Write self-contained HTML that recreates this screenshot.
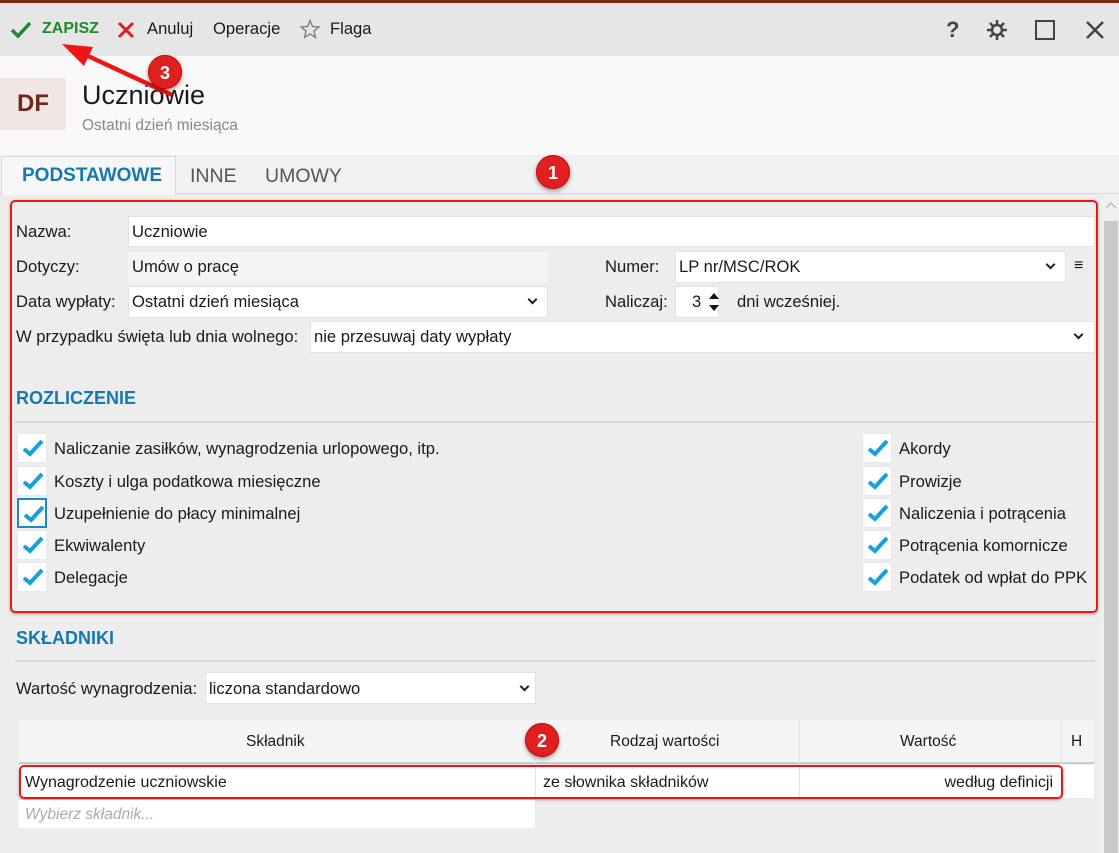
<!DOCTYPE html>
<html><head><meta charset="utf-8"><style>
*{box-sizing:border-box;margin:0;padding:0}
body{width:1119px;height:853px;overflow:hidden;background:#ededed;font-family:"Liberation Sans",sans-serif;font-size:16px;color:#1a1a1a;position:relative}
.a{position:absolute;white-space:nowrap}
.in{position:absolute;background:#fff;border:1px solid #e2e2e2}
.t{position:absolute;white-space:nowrap;line-height:20px}
.f{font-size:16.6px}
.cb{position:absolute;width:30px;height:30px;background:#fff;border:1px solid #e8e8e8}
.cb svg{position:absolute;left:4px;top:4px}
.badge{position:absolute;width:34px;height:34px;border-radius:50%;background:#e02020;color:#fff;font-weight:bold;font-size:18px;text-align:center;line-height:34px;box-shadow:0 2px 4px rgba(0,0,0,.4);border:1px solid #c00}
.h{color:#1479b0;font-weight:bold;font-size:18px}
.chev{position:absolute;width:8px;height:8px;border-right:2px solid #222;border-bottom:2px solid #222;transform:rotate(45deg)}
</style></head><body>
<div class="a" style="left:0;top:0;width:1119px;height:3px;background:#7a2810"></div>
<div class="a" style="left:0;top:3px;width:1119px;height:53px;background:#e6e6e6"></div>
<svg class="a" style="left:10px;top:20px" width="22" height="20"><path d="M2 10 L8 16 L20 3" stroke="#1e8a2a" stroke-width="3.5" fill="none"/></svg>
<div class="t" style="left:42px;top:19px;color:#1e8a2a;font-weight:bold">ZAPISZ</div>
<svg class="a" style="left:117px;top:21px" width="18" height="18"><path d="M2 2 L16 16 M16 2 L2 16" stroke="#e02020" stroke-width="3"/></svg>
<div class="t f" style="left:147px;top:19px">Anuluj</div>
<div class="t f" style="left:213px;top:19px">Operacje</div>
<svg class="a" style="left:300px;top:19px" width="20" height="20"><path d="M10 1.5 L12.5 7.5 L19 8 L14 12 L15.5 18.5 L10 15 L4.5 18.5 L6 12 L1 8 L7.5 7.5 Z" stroke="#777" stroke-width="1.3" fill="none"/></svg>
<div class="t f" style="left:330px;top:19px">Flaga</div>
<div class="t" style="left:946px;top:20px;font-size:22px;color:#444;font-weight:bold">?</div>
<svg class="a" style="left:986px;top:19px" width="22" height="22"><circle cx="11" cy="11" r="5" stroke="#444" stroke-width="2.5" fill="none"/><path d="M11 1v5M11 16v5M1 11h5M16 11h5M4 4l3.5 3.5M14.5 14.5L18 18M18 4l-3.5 3.5M7.5 14.5L4 18" stroke="#444" stroke-width="2.5"/></svg>
<div class="a" style="left:1035px;top:20px;width:20px;height:20px;border:2.5px solid #444"></div>
<svg class="a" style="left:1085px;top:20px" width="20" height="20"><path d="M2 2L18 18M18 2L2 18" stroke="#444" stroke-width="2.5"/></svg>

<div class="a" style="left:0;top:56px;width:1119px;height:99px;background:#f9f9f9"></div>
<div class="a" style="left:0;top:78px;width:66px;height:52px;background:#f0e6e4;color:#6b2a1a;font-size:24px;font-weight:bold;text-align:center;line-height:52px">DF</div>
<div class="t" style="left:82px;top:80px;font-size:27px;line-height:30px">Uczniowie</div>
<div class="t" style="left:82px;top:116px;font-size:15.5px;color:#888">Ostatni dzień miesiąca</div>

<div class="a" style="left:0;top:155px;width:1119px;height:39px;background:#f1f1f1;border-bottom:1px solid #d5d5d5"></div>
<div class="a" style="left:1px;top:156px;width:175px;height:39px;background:#f7f7f7;border:1px solid #d8d8d8;border-bottom:none"></div>
<div class="t" style="left:22px;top:166px;font-size:19px;color:#1479b0;font-weight:bold">PODSTAWOWE</div>
<div class="t" style="left:190px;top:166px;font-size:19.5px;color:#555">INNE</div>
<div class="t" style="left:265px;top:166px;font-size:19.5px;color:#555">UMOWY</div>

<div class="a" style="left:1101px;top:194px;width:18px;height:659px;background:#f0f0f0"></div>
<div class="a" style="left:1104px;top:221px;width:14px;height:632px;background:#c9c9c9"></div>
<svg class="a" style="left:1104px;top:200px" width="14" height="10"><path d="M2 8L7 3L12 8" stroke="#bbb" stroke-width="1.5" fill="none"/></svg>

<div class="t f" style="left:16px;top:222px">Nazwa:</div>
<div class="in" style="left:128px;top:216px;width:967px;height:31px"></div>
<div class="t f" style="left:132px;top:222px">Uczniowie</div>
<div class="t f" style="left:16px;top:257px">Dotyczy:</div>
<div class="a" style="left:128px;top:252px;width:420px;height:31px;background:#f4f4f4"></div>
<div class="t f" style="left:132px;top:257px">Umów o pracę</div>
<div class="t f" style="left:605px;top:257px">Numer:</div>
<div class="in" style="left:675px;top:251px;width:391px;height:32px"></div>
<div class="t f" style="left:679px;top:257px">LP nr/MSC/ROK</div>
<div class="chev" style="left:1047px;top:261px;width:7px;height:7px"></div>
<div class="t" style="left:1074px;top:256px">≡</div>
<div class="t f" style="left:16px;top:292px">Data wypłaty:</div>
<div class="in" style="left:128px;top:286px;width:420px;height:32px"></div>
<div class="t f" style="left:132px;top:292px">Ostatni dzień miesiąca</div>
<div class="chev" style="left:529px;top:296px;width:7px;height:7px"></div>
<div class="t f" style="left:605px;top:292px">Naliczaj:</div>
<div class="in" style="left:675px;top:286px;width:44px;height:32px"></div>
<div class="t f" style="left:692px;top:292px">3</div>
<svg class="a" style="left:708px;top:291px" width="12" height="22"><path d="M1 8L6 2L11 8Z M1 14L6 20L11 14Z" fill="#111"/></svg>
<div class="t f" style="left:737px;top:292px">dni wcześniej.</div>
<div class="t f" style="left:16px;top:327px">W przypadku święta lub dnia wolnego:</div>
<div class="in" style="left:310px;top:321px;width:785px;height:32px"></div>
<div class="t f" style="left:314px;top:327px">nie przesuwaj daty wypłaty</div>
<div class="chev" style="left:1075px;top:331px;width:7px;height:7px"></div>

<div class="t h" style="left:16px;top:388px">ROZLICZENIE</div>
<div class="a" style="left:15px;top:421px;width:1080px;height:2px;background:#d8d8d8"></div>

<div id="cbs"></div>
<div class="a" style="left:10px;top:200px;width:1088px;height:413px;border:2px solid #f01515;border-radius:5px;box-shadow:0 1px 3px rgba(0,0,0,.3)"></div>

<div class="t h" style="left:16px;top:628px">SKŁADNIKI</div>
<div class="a" style="left:15px;top:660px;width:1080px;height:2px;background:#d8d8d8"></div>
<div class="t f" style="left:16px;top:679px">Wartość wynagrodzenia:</div>
<div class="in" style="left:205px;top:672px;width:331px;height:32px"></div>
<div class="t f" style="left:209px;top:679px">liczona standardowo</div>
<div class="chev" style="left:521px;top:683px;width:7px;height:7px"></div>

<div class="a" style="left:19px;top:720px;width:1075px;height:44px;background:#f5f5f5;border-bottom:2px solid #ccc"></div>
<div class="a" style="left:535px;top:720px;width:1px;height:78px;background:#e4e4e4"></div>
<div class="a" style="left:799px;top:720px;width:1px;height:78px;background:#e4e4e4"></div>
<div class="a" style="left:1061px;top:720px;width:1px;height:44px;background:#e4e4e4"></div>
<div class="t" style="left:246px;top:732px;font-size:15.5px">Składnik</div>
<div class="t" style="left:610px;top:732px;font-size:15.5px">Rodzaj wartości</div>
<div class="t" style="left:900px;top:732px;font-size:15.5px">Wartość</div>
<div class="t" style="left:1071px;top:732px;font-size:15.5px">H</div>
<div class="a" style="left:19px;top:765px;width:1075px;height:33px;background:#fff"></div>
<div class="a" style="left:535px;top:765px;width:1px;height:33px;background:#e4e4e4"></div>
<div class="a" style="left:799px;top:765px;width:1px;height:33px;background:#e4e4e4"></div>
<div class="t" style="left:25px;top:773px;font-size:16px">Wynagrodzenie uczniowskie</div>
<div class="t" style="left:543px;top:773px;font-size:16px">ze słownika składników</div>
<div class="t" style="right:66px;top:773px;font-size:16px">według definicji</div>
<div class="a" style="left:19px;top:765px;width:1044px;height:34px;border:2px solid #f01515;border-radius:5px;box-shadow:0 1px 3px rgba(0,0,0,.3)"></div>
<div class="a" style="left:19px;top:800px;width:516px;height:28px;background:#fff"></div>
<div class="t" style="left:25px;top:805px;font-size:15.5px;color:#aaa;font-style:italic">Wybierz składnik...</div>

<svg class="a" style="left:0;top:0" width="220" height="110"><path d="M172 95 L88 56" stroke="#f01515" stroke-width="4.5"/><path d="M62 44 L93 47 L84 66 Z" fill="#f01515"/></svg>
<div class="badge" style="left:148px;top:55px">3</div>
<div class="badge" style="left:536px;top:155px">1</div>
<div class="badge" style="left:525px;top:723px">2</div>

<script>
var L=["Naliczanie zasiłków, wynagrodzenia urlopowego, itp.","Koszty i ulga podatkowa miesięczne","Uzupełnienie do płacy minimalnej","Ekwiwalenty","Delegacje"];
var R=["Akordy","Prowizje","Naliczenia i potrącenia","Potrącenia komornicze","Podatek od wpłat do PPK"];
var Y=[433,466,498,530,562],h="";
var ck='<svg width="22" height="20"><path d="M2 11L8 16L20 3" stroke="#14a0dc" stroke-width="4" fill="none"/></svg>';
for(var i=0;i<5;i++){
h+='<div class="cb" style="left:17px;top:'+Y[i]+'px'+(i==2?';border:2px solid #1a8ad0':'')+'">'+ck+'</div><div class="t f" style="left:54px;top:'+(Y[i]+6)+'px">'+L[i]+'</div>';
h+='<div class="cb" style="left:862px;top:'+Y[i]+'px">'+ck+'</div><div class="t f" style="left:899px;top:'+(Y[i]+6)+'px">'+R[i]+'</div>';}
document.getElementById('cbs').innerHTML=h;
</script>
</body></html>
